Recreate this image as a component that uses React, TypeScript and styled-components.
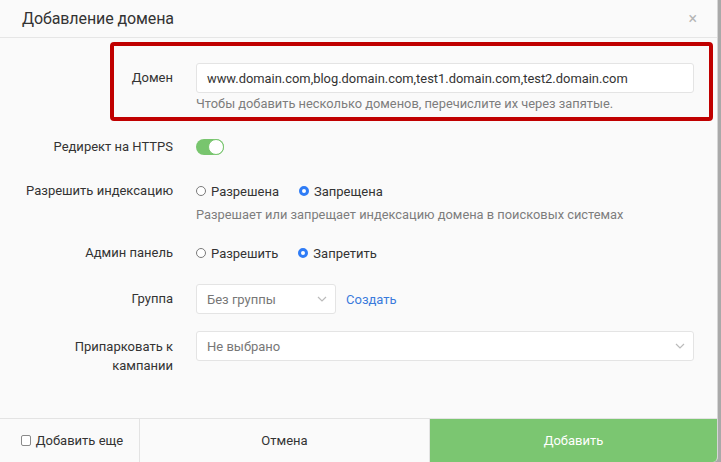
import React from "react";
import styled, { createGlobalStyle } from "styled-components";

const Global = createGlobalStyle`
  html, body { margin: 0; padding: 0; }
  body {
    background: #a9a9a9;
    font-family: Roboto, "Noto Sans", "Liberation Sans", sans-serif;
    width: 721px;
    height: 462px;
    overflow: hidden;
  }
  * { box-sizing: border-box; }
`;

const Modal = styled.div`
  width: 718px;
  height: 462px;
  background: #fafafa;
  border-right: 1px solid #d6d6d6;
  border-radius: 0 0 5px 0;
  display: flex;
  flex-direction: column;
  overflow: hidden;
`;

const Header = styled.div`
  height: 38px;
  flex: none;
  display: flex;
  align-items: center;
  justify-content: space-between;
  padding: 0 20px 0 22px;
  border-bottom: 1px solid #e6e6e6;
  background: #fafafa;
`;

const Title = styled.div`
  font-size: 16px;
  color: #333;
  letter-spacing: -0.1px;
`;

const Close = styled.div`
  color: #b5b5b5;
  font-size: 16px;
  line-height: 1;
`;

const Body = styled.div`
  flex: 1;
  padding: 25px 23px 0 23px;
  display: flex;
  flex-direction: column;
`;

const Row = styled.div<{ $mt?: number }>`
  position: relative;
  display: grid;
  grid-template-columns: 150px 1fr;
  column-gap: 23px;
  align-items: start;
  margin-top: ${(p) => p.$mt ?? 0}px;
`;

const Label = styled.div<{ $multi?: boolean }>`
  text-align: right;
  font-size: 13px;
  color: #333;
  line-height: ${(p) => (p.$multi ? "19px" : "30px")};
  padding-top: ${(p) => (p.$multi ? "6px" : "0")};
`;

const Control = styled.div`
  display: flex;
  flex-direction: column;
`;

const Line = styled.div`
  height: 30px;
  display: flex;
  align-items: center;
  gap: 10px;
`;

const Help = styled.div<{ $h?: number }>`
  font-size: 12.85px;
  color: #7d7d7d;
  line-height: ${(p) => p.$h ?? 20}px;
`;

const Input = styled.div`
  width: 100%;
  height: 30px;
  background: #fff;
  border: 1px solid #e4e4e4;
  border-radius: 3px;
  padding: 0 10px;
  display: flex;
  align-items: center;
  font-size: 12.9px;
  color: #333;
`;

const Highlight = styled.div`
  position: absolute;
  top: -21px;
  bottom: -7px;
  left: 87px;
  right: -19px;
  border: 4px solid #c00000;
  border-radius: 4px;
  pointer-events: none;
`;

const Toggle = styled.div`
  width: 28px;
  height: 16px;
  border-radius: 8px;
  background: #78c56e;
  position: relative;
`;

const Knob = styled.div`
  position: absolute;
  right: 0;
  top: 0;
  width: 16px;
  height: 16px;
  border-radius: 50%;
  background: #fff;
  border: 1px solid #78c56e;
`;

const RadioGroup = styled.div`
  display: flex;
  align-items: center;
  gap: 20px;
`;

const RadioItem = styled.label`
  display: flex;
  align-items: center;
  gap: 5px;
  font-size: 13px;
  color: #333;
`;

const RadioDot = styled.span<{ $on?: boolean }>`
  width: 10px;
  height: 10px;
  border-radius: 50%;
  flex: none;
  background: #fff;
  border: ${(p) => (p.$on ? "3px solid #2f7cf6" : "1px solid #7a7a7a")};
`;

const Select = styled.div<{ $w?: string }>`
  width: ${(p) => p.$w ?? "100%"};
  height: 30px;
  background: #fff;
  border: 1px solid #e4e4e4;
  border-radius: 3px;
  padding: 0 8px 0 10px;
  display: flex;
  align-items: center;
  justify-content: space-between;
  font-size: 13px;
  color: #777;
`;

const Link = styled.span`
  color: #3a7bdc;
  font-size: 13px;
`;

const Footer = styled.div`
  height: 44px;
  flex: none;
  display: grid;
  grid-template-columns: 140px 290px 1fr;
  border-top: 1px solid #e3e3e3;
`;

const FooterCell = styled.div<{ $primary?: boolean; $pl?: number }>`
  display: flex;
  align-items: center;
  justify-content: center;
  font-size: 13px;
  color: ${(p) => (p.$primary ? "#fff" : "#333")};
  background: ${(p) => (p.$primary ? "#7bc671" : "#fafafa")};
  border-right: ${(p) => (p.$primary ? "none" : "1px solid #e3e3e3")};
  padding-left: ${(p) => p.$pl ?? 0}px;
  gap: 5px;
`;

const Check = styled.span`
  width: 10px;
  height: 11px;
  border: 1px solid #8a8a8a;
  border-radius: 2px;
  background: #fff;
`;

const Chevron = () => (
  <svg width="10" height="6" viewBox="0 0 10 6">
    <path d="M1 1l4 4 4-4" fill="none" stroke="#bbb" strokeWidth="1.2" />
  </svg>
);

export default function App() {
  return (
    <>
      <Global />
      <Modal>
        <Header>
          <Title>Добавление домена</Title>
          <Close>×</Close>
        </Header>
        <Body>
          <Row>
            <Highlight />
            <Label>Домен</Label>
            <Control>
              <Input>www.domain.com,blog.domain.com,test1.domain.com,test2.domain.com</Input>
              <Help $h={21}>Чтобы добавить несколько доменов, перечислите их через запятые.</Help>
            </Control>
          </Row>
          <Row $mt={18}>
            <Label>Редирект на HTTPS</Label>
            <Control>
              <Line>
                <Toggle>
                  <Knob />
                </Toggle>
              </Line>
            </Control>
          </Row>
          <Row $mt={14}>
            <Label>Разрешить индексацию</Label>
            <Control>
              <Line>
                <RadioGroup>
                  <RadioItem>
                    <RadioDot />
                    Разрешена
                  </RadioItem>
                  <RadioItem>
                    <RadioDot $on />
                    Запрещена
                  </RadioItem>
                </RadioGroup>
              </Line>
              <Help $h={17}>Разрешает или запрещает индексацию домена в поисковых системах</Help>
            </Control>
          </Row>
          <Row $mt={15}>
            <Label>Админ панель</Label>
            <Control>
              <Line>
                <RadioGroup>
                  <RadioItem>
                    <RadioDot />
                    Разрешить
                  </RadioItem>
                  <RadioItem>
                    <RadioDot $on />
                    Запретить
                  </RadioItem>
                </RadioGroup>
              </Line>
            </Control>
          </Row>
          <Row $mt={16}>
            <Label>Группа</Label>
            <Control>
              <Line>
                <Select $w="140px">
                  Без группы
                  <Chevron />
                </Select>
                <Link>Создать</Link>
              </Line>
            </Control>
          </Row>
          <Row $mt={17}>
            <Label $multi>Припарковать к кампании</Label>
            <Control>
              <Select>
                Не выбрано
                <Chevron />
              </Select>
            </Control>
          </Row>
        </Body>
        <Footer>
          <FooterCell $pl={5}>
            <Check />
            Добавить еще
          </FooterCell>
          <FooterCell>Отмена</FooterCell>
          <FooterCell $primary>Добавить</FooterCell>
        </Footer>
      </Modal>
    </>
  );
}
